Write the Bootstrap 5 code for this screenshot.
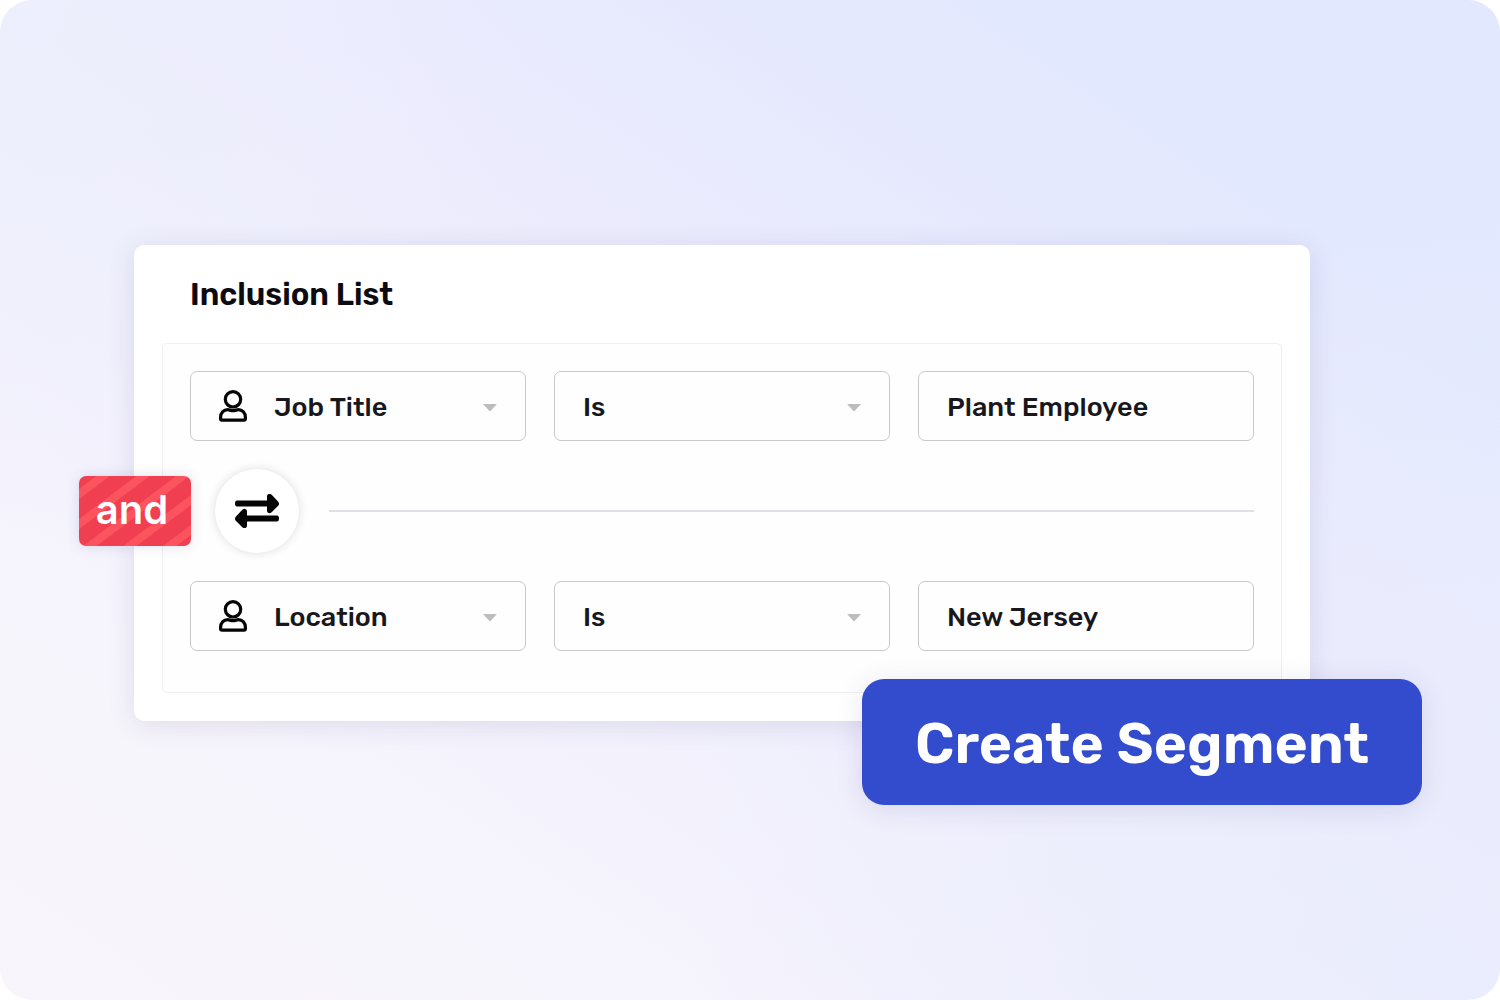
<!DOCTYPE html>
<html lang="en">
<head>
<meta charset="utf-8">
<meta name="viewport" content="width=device-width, initial-scale=1">
<title>Create Segment</title>
<link rel="stylesheet" href="https://cdn.jsdelivr.net/npm/bootstrap@5.3.0/dist/css/bootstrap.min.css">
<style>
  body { font-family: Rubik, Inter, Roboto, sans-serif; color: #101014; background: #fff; }
  .stage {
    padding: 245px 190px 194px 134px;
    border-radius: 32px;
    background:
      radial-gradient(circle at 0% 0%, rgba(237, 239, 253, .9) 0%, rgba(237, 239, 253, 0) 30%),
      radial-gradient(circle at 100% 100%, rgba(234, 237, 253, 1) 0%, rgba(234, 237, 253, 0) 45%),
      linear-gradient(34deg, #f8f5fb 0%, #f6f4fc 22%, #ebebfd 60%, #e2e8fe 84%, #e2e8fe 100%);
  }
  .segment-card { border-radius: 10px; padding: 28px; box-shadow: 0 4px 28px rgba(60, 50, 110, .12); }
  .segment-title { font-size: 31px; line-height: 44px; padding: 0 28px; margin-bottom: 26px; font-weight: 600; color: #0c0b12; }
  .rules { border: 1px solid #f0eff3; border-radius: 5px; padding: 27px 27px 41px; gap: 28px; background: #fefefe; }
  .rule-row { gap: 28px; }
  .field-box { flex: 1 1 0; min-width: 0; height: 70px; border: 1px solid #c9c9cd; border-radius: 7px; padding: 0 28px; background: #fefefe; }
  .field-box:focus-within { border-color: #334bcd; }
  .field-icon { width: 28px; height: 32px; margin-right: 27px; }
  .field-caret { width: 14px; height: 8px; margin-top: 4px; pointer-events: none; }
  .field-control { appearance: none; border: 0; outline: 0; background: transparent; padding: 2px 0 0; min-width: 0; height: 68px; font-size: 27px; font-weight: 500; color: #18181c; }
  .join-row { padding-left: 25px; gap: 30px; }
  .and-tag {
    left: -111px; width: 112px; height: 70px; border-radius: 7px; padding-right: 6px; font-family: Inter, Roboto, sans-serif; font-size: 40px; line-height: 68px; font-weight: 600; color: #fff;
    background: repeating-linear-gradient(143deg, #f03f50 0 10px, #fb545e 11px 18px, #f03f50 19px 24px);
    box-shadow: 0 0 14px rgba(60, 50, 130, .14);
  }
  .swap-btn { width: 84px; height: 84px; border: 0; background: #fff; box-shadow: 0 0 8px rgba(50, 30, 70, .16); }
  .join-line { height: 2px; background: #dfdee9; }
  .create-btn {
    right: -112px; bottom: -84px; width: 560px; height: 126px; border: 0; border-radius: 22px; padding: 4px 0 0;
    background: #334bcd; color: #fff; font-size: 57px; line-height: 64px; font-weight: 600;
    box-shadow: 0 4px 28px rgba(60, 40, 110, .12);
  }
  .create-btn:hover { background: #2b41b8; color: #fff; }
</style>
</head>
<body>
<svg class="d-none" aria-hidden="true">
  <symbol id="person" viewBox="0 0 28 32">
    <g fill="none" stroke="#050505" stroke-width="3.200" stroke-linejoin="round">
      <circle cx="14" cy="9.300" r="7.700"/>
      <path d="M3 30.200H25Q26.400 30.200 26.400 28.800V27.500C26.400 22.500 23 19.700 19.300 19.700C17.500 19.700 16.500 20.700 14 20.700S10.500 19.700 8.700 19.700C5 19.700 1.600 22.500 1.600 27.500V28.800Q1.600 30.200 3 30.200Z"/>
    </g>
  </symbol>
  <symbol id="caret" viewBox="0 0 14 8"><path d="M0 0H14L7.800 6.700Q7 7.500 6.200 6.700Z" fill="#bdbdc0"/></symbol>
</svg>
<main class="stage min-vh-100">
  <section class="segment-card bg-white position-relative">
    <h1 class="segment-title">Inclusion List</h1>
    <div class="rules d-flex flex-column">
      <div class="rule-row d-flex">
        <div class="field-box d-flex align-items-center">
          <svg class="field-icon flex-shrink-0" aria-hidden="true"><use href="#person"/></svg>
          <select class="field-control flex-grow-1" aria-label="First attribute"><option>Job Title</option><option>Location</option></select>
          <svg class="field-caret flex-shrink-0" aria-hidden="true"><use href="#caret"/></svg>
        </div>
        <div class="field-box d-flex align-items-center">
          <select class="field-control flex-grow-1" aria-label="First condition"><option>Is</option></select>
          <svg class="field-caret flex-shrink-0" aria-hidden="true"><use href="#caret"/></svg>
        </div>
        <div class="field-box d-flex align-items-center">
          <input class="field-control w-100" type="text" value="Plant Employee" aria-label="First value">
        </div>
      </div>
      <div class="join-row d-flex align-items-center position-relative">
        <div class="and-tag position-absolute text-center">and</div>
        <button class="swap-btn rounded-circle d-flex align-items-center justify-content-center flex-shrink-0 p-0" type="button" aria-label="Swap rules">
          <svg width="44" height="34" viewBox="0 0 44 34" aria-hidden="true">
            <g fill="#050505" stroke="#050505" stroke-width="2" stroke-linejoin="round">
              <path d="M2 7.500H33V2Q34 0 36 1.500L42.500 8.500Q43.500 10 42.500 11L36 17.500Q34 19 33 17V11.500H2Q1 11.500 1 9.500T2 7.500Z"/>
              <path d="M42 22.500H11V17Q10 15 8 16.500L1.500 23.500Q.5 25 1.500 26L8 32.500Q10 34 11 32V26.500H42Q43 26.500 43 24.500T42 22.500Z"/>
            </g>
          </svg>
        </button>
        <div class="join-line flex-grow-1"></div>
      </div>
      <div class="rule-row d-flex">
        <div class="field-box d-flex align-items-center">
          <svg class="field-icon flex-shrink-0" aria-hidden="true"><use href="#person"/></svg>
          <select class="field-control flex-grow-1" aria-label="Second attribute"><option>Location</option><option>Job Title</option></select>
          <svg class="field-caret flex-shrink-0" aria-hidden="true"><use href="#caret"/></svg>
        </div>
        <div class="field-box d-flex align-items-center">
          <select class="field-control flex-grow-1" aria-label="Second condition"><option>Is</option></select>
          <svg class="field-caret flex-shrink-0" aria-hidden="true"><use href="#caret"/></svg>
        </div>
        <div class="field-box d-flex align-items-center">
          <input class="field-control w-100" type="text" value="New Jersey" aria-label="Second value">
        </div>
      </div>
    </div>
    <button class="create-btn btn position-absolute" type="button">Create Segment</button>
  </section>
</main>
<script src="https://cdn.jsdelivr.net/npm/bootstrap@5.3.0/dist/js/bootstrap.bundle.min.js"></script>
</body>
</html>
